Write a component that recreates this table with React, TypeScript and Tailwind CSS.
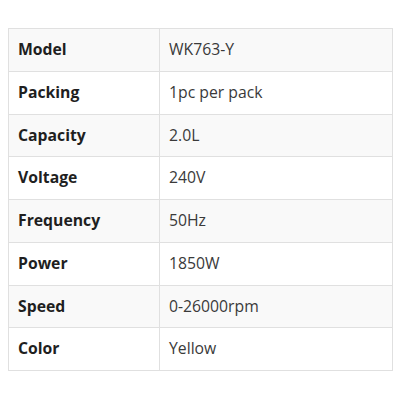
const rows: [string, string][] = [
  ['Model', 'WK763-Y'],
  ['Packing', '1pc per pack'],
  ['Capacity', '2.0L'],
  ['Voltage', '240V'],
  ['Frequency', '50Hz'],
  ['Power', '1850W'],
  ['Speed', '0-26000rpm'],
  ['Color', 'Yellow'],
];

export default function App() {
  return (
    <div className="w-[400px] h-[400px] bg-white pt-[28px] pl-[8px] font-['Open_Sans',sans-serif]">
      <table className="w-[385px] border-collapse text-[15.75px]">
        <tbody>
          {rows.map(([label, value], i) => (
            <tr key={label} className={i % 2 === 0 ? 'bg-[#f9f9f9]' : 'bg-white'}>
              <td className="w-[151px] h-[42.75px] border border-[#e0e0e0] px-[9px] font-bold text-[#1f1f1f]">
                {label}
              </td>
              <td className="h-[42.75px] border border-[#e0e0e0] px-[9px] text-[#3a3a3a]">{value}</td>
            </tr>
          ))}
        </tbody>
      </table>
    </div>
  );
}
